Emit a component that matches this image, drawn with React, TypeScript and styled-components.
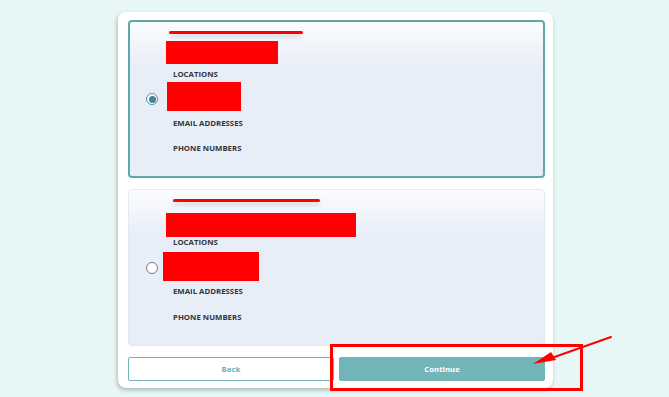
import React from "react";
import styled, { createGlobalStyle } from "styled-components";

const Global = createGlobalStyle`
  html, body { margin: 0; padding: 0; }
  body {
    background: #e7f7f6;
    font-family: "Open Sans", Lato, sans-serif;
    width: 669px;
    height: 397px;
    overflow: hidden;
  }
`;

const Page = styled.div`
  position: relative;
  width: 669px;
  height: 397px;
  padding-top: 12px;
  padding-left: 118px;
  box-sizing: border-box;
`;

const Card = styled.div`
  width: 435px;
  height: 376px;
  box-sizing: border-box;
  background: #ffffff;
  border-radius: 8px;
  box-shadow: -1px 2px 4px rgba(0, 0, 0, 0.26);
  padding: 8px 8px 7px 10px;
  display: flex;
  flex-direction: column;
  gap: 11px;
`;

const Option = styled.div<{ $selected?: boolean }>`
  position: relative;
  box-sizing: border-box;
  height: ${(p) => (p.$selected ? 158 : 157)}px;
  border: ${(p) => (p.$selected ? "2px solid #5ea8ab" : "1px solid #e1e8f4")};
  border-radius: 4px;
  background: linear-gradient(to bottom, #fbfcfe 0px, #f2f5fb 22px, #e8eef8 46px, #e8eef8 100%);
  display: flex;
  align-items: center;
  padding-left: ${(p) => (p.$selected ? 16 : 17)}px;
`;

const Radio = styled.div<{ $selected?: boolean }>`
  width: 12px;
  height: 12px;
  box-sizing: border-box;
  border-radius: 50%;
  flex-shrink: 0;
  background: #fff;
  border: ${(p) => (p.$selected ? "1.5px solid #4f919a" : "1px solid #7a7a7a")};
  display: flex;
  align-items: center;
  justify-content: center;
  &::after {
    content: "";
    display: ${(p) => (p.$selected ? "block" : "none")};
    width: 7px;
    height: 7px;
    border-radius: 50%;
    background: #3f8793;
  }
`;

const Content = styled.div`
  align-self: stretch;
  display: flex;
  flex-direction: column;
  align-items: flex-start;
  margin-left: 8px;
`;

const RedLine = styled.div<{ $top: number; $left: number; $width: number }>`
  margin-top: ${(p) => p.$top}px;
  margin-left: ${(p) => p.$left}px;
  width: ${(p) => p.$width}px;
  height: 3px;
  border-radius: 2px;
  background: #ff0000;
  box-shadow: 0 3px 4px rgba(60, 60, 80, 0.18);
`;

const RedBox = styled.div<{ $top: number; $left: number; $width: number; $height: number }>`
  margin-top: ${(p) => p.$top}px;
  margin-left: ${(p) => p.$left}px;
  width: ${(p) => p.$width}px;
  height: ${(p) => p.$height}px;
  background: #ff0000;
`;

const Label = styled.div<{ $top: number }>`
  margin-top: ${(p) => p.$top}px;
  margin-left: 7px;
  height: 10px;
  line-height: 10px;
  font-size: 7.8px;
  font-weight: 700;
  color: #333538;
  text-transform: uppercase;
`;

const Buttons = styled.div`
  display: flex;
  gap: 5px;
`;

const Button = styled.button<{ $primary?: boolean }>`
  flex: 1;
  height: 24px;
  box-sizing: border-box;
  border-radius: 2px;
  font-family: "Open Sans", Lato, sans-serif;
  font-size: 7.8px;
  font-weight: 700;
  padding: 0;
  border: ${(p) => (p.$primary ? "1px solid #72b5b8" : "1.5px solid #72b5b8")};
  background: ${(p) => (p.$primary ? "#72b5b8" : "#ffffff")};
  color: ${(p) => (p.$primary ? "#ffffff" : "#6fb1b4")};
`;

const Highlight = styled.div`
  position: absolute;
  left: 330px;
  top: 344px;
  width: 253px;
  height: 47px;
  box-sizing: border-box;
  border: 3px solid #ff0000;
  pointer-events: none;
`;

const Arrow = styled.svg`
  position: absolute;
  left: 0;
  top: 0;
  pointer-events: none;
`;

export default function App() {
  return (
    <>
      <Global />
      <Page>
        <Card>
          <Option $selected>
            <Radio $selected />
            <Content>
              <RedLine $top={9} $left={3} $width={134} />
              <RedBox $top={7} $left={0} $width={112} $height={23} />
              <Label $top={5}>Locations</Label>
              <RedBox $top={3} $left={1} $width={74} $height={29} />
              <Label $top={7}>Email Addresses</Label>
              <Label $top={15}>Phone Numbers</Label>
            </Content>
          </Option>
          <Option>
            <Radio />
            <Content>
              <RedLine $top={9} $left={7} $width={147} />
              <RedBox $top={11} $left={0} $width={190} $height={24} />
              <Label $top={0}>Locations</Label>
              <RedBox $top={5} $left={-3} $width={96} $height={29} />
              <Label $top={5}>Email Addresses</Label>
              <Label $top={16}>Phone Numbers</Label>
            </Content>
          </Option>
          <Buttons>
            <Button>Back</Button>
            <Button $primary>Continue</Button>
          </Buttons>
        </Card>
        <Highlight />
        <Arrow width="669" height="397" viewBox="0 0 669 397">
          <line x1="611" y1="337" x2="546" y2="360" stroke="#ff0000" strokeWidth="2" strokeLinecap="round" />
          <polygon points="533,364 551,352 556,360" fill="#ff0000" />
        </Arrow>
      </Page>
    </>
  );
}
